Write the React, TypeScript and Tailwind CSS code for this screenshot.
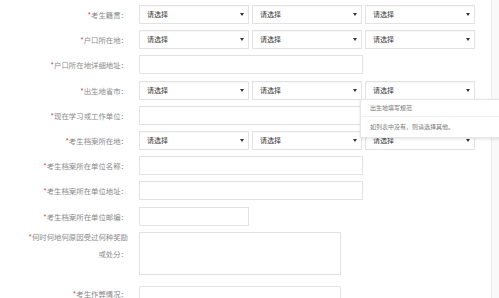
import React from 'react';

type Row =
  | { kind: 'select3'; label: string; tip?: boolean }
  | { kind: 'input'; label: string; width: string };

const rows: Row[] = [
  { kind: 'select3', label: '考生籍贯' },
  { kind: 'select3', label: '户口所在地' },
  { kind: 'input', label: '户口所在地详细地址', width: 'w-[224px]' },
  { kind: 'select3', label: '出生地省市', tip: true },
  { kind: 'input', label: '现在学习或工作单位', width: 'w-[224px]' },
  { kind: 'select3', label: '考生档案所在地' },
  { kind: 'input', label: '考生档案所在单位名称', width: 'w-[224px]' },
  { kind: 'input', label: '考生档案所在单位地址', width: 'w-[224px]' },
  { kind: 'input', label: '考生档案所在单位邮编', width: 'w-[110px]' },
];

const Label = ({ text, className = '' }: { text: string; className?: string }) => (
  <div className={`w-[128px] shrink-0 text-right text-[7.4px] text-[#888] leading-[19px] ${className}`}>
    <span className="text-[#e4393c]">*</span>
    {text}：
  </div>
);

const Select = ({ tip }: { tip?: boolean }) => (
  <div className="relative w-[110px] h-[19px] border border-[#e2e2e2] bg-white flex items-center justify-between pl-[7px] pr-[4px] shadow-[inset_0_1px_1px_rgba(0,0,0,0.03)]">
    <span className="text-[7px] text-[#333]">请选择</span>
    <svg width="4" height="3" viewBox="0 0 4 3">
      <path d="M0 0 L4 0 L2 3 Z" fill="#333" />
    </svg>
    {tip && (
      <div className="absolute left-[-6px] top-[17px] w-[150px] z-10 bg-white border border-[#e6e6e6] shadow-[0_1px_3px_rgba(0,0,0,0.12)] text-[6px] text-[#777]">
        <div className="h-[17px] flex items-center pl-[9px] border-b border-[#eee]">出生地填写规范</div>
        <div className="h-[20px] flex items-center pl-[9px]">如列表中没有，则请选择其他。</div>
      </div>
    )}
  </div>
);

export default function App() {
  return (
    <div
      className="w-[499px] h-[298px] overflow-hidden flex bg-[#f9f9f9]"
      style={{ fontFamily: '"Noto Sans CJK SC", "Noto Sans", sans-serif' }}
    >
      <div className="w-[492px] shrink-0 bg-white border-r border-[#ececec] pt-[5px] flex flex-col">
        <div className="flex flex-col gap-[6.2px]">
          {rows.map((r) => (
            <div key={r.label} className="flex items-center gap-[11px]">
              <Label text={r.label} />
              {r.kind === 'select3' ? (
                <div className="flex gap-[3px]">
                  <Select />
                  <Select />
                  <Select tip={r.tip} />
                </div>
              ) : (
                <div className={`${r.width} h-[19px] border border-[#e2e2e2] bg-white`} />
              )}
            </div>
          ))}
          <div className="flex items-start gap-[11px]">
            <div className="w-[128px] shrink-0 text-right text-[7.4px] text-[#888] leading-[17px] -mt-[4px]">
              <span className="text-[#e4393c]">*</span>何时何地何原因受过何种奖励
              <br />
              或处分：
            </div>
            <div className="w-[202px] h-[43px] border border-[#e2e2e2] bg-white" />
          </div>
        </div>
        <div className="flex items-start gap-[11px] mt-[11px]">
          <Label text="考生作弊情况" className="-mt-[2px]" />
          <div className="w-[202px] h-[22px] border border-[#e2e2e2] bg-white" />
        </div>
      </div>
    </div>
  );
}
